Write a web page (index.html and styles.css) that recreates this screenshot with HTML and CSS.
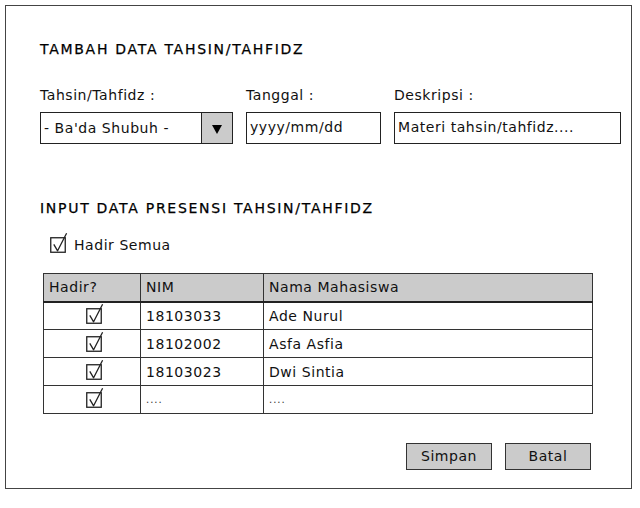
FILE: index.html
```html
<!DOCTYPE html>
<html>
<head>
<meta charset="utf-8">
<link rel="stylesheet" href="styles.css">
</head>
<body>
<div class="frame">
  <div class="h1">TAMBAH DATA TAHSIN/TAHFIDZ</div>
  <div class="form">
    <div class="label">Tahsin/Tahfidz :</div>
    <div class="label">Tanggal :</div>
    <div class="label">Deskripsi :</div>
    <div class="select">
      <span class="select-text">- Ba'da Shubuh -</span>
      <span class="select-btn"><span class="tri"></span></span>
    </div>
    <div class="input">yyyy/mm/dd</div>
    <div class="input">Materi tahsin/tahfidz....</div>
  </div>
  <div class="h2">INPUT DATA PRESENSI TAHSIN/TAHFIDZ</div>
  <div class="check-row">
    <svg class="cb" width="18" height="22" viewBox="0 0 18 22"><rect x="0.75" y="5.75" width="14.5" height="14.5" fill="#fff" stroke="#222" stroke-width="1.3"/><path d="M3.8 12.4 L7.6 18.8 L16.6 1.2" fill="none" stroke="#222" stroke-width="1.3" stroke-linejoin="round"/></svg>
    <span>Hadir Semua</span>
  </div>
  <table class="grid">
    <tr class="head"><td class="c1">Hadir?</td><td class="c2">NIM</td><td class="c3">Nama Mahasiswa</td></tr>
    <tr><td class="c1 ctr"><svg class="cb" width="18" height="22" viewBox="0 0 18 22"><rect x="0.75" y="5.75" width="14.5" height="14.5" fill="#fff" stroke="#222" stroke-width="1.3"/><path d="M3.8 12.4 L7.6 18.8 L16.6 1.2" fill="none" stroke="#222" stroke-width="1.3" stroke-linejoin="round"/></svg></td><td>18103033</td><td>Ade Nurul</td></tr>
    <tr><td class="c1 ctr"><svg class="cb" width="18" height="22" viewBox="0 0 18 22"><rect x="0.75" y="5.75" width="14.5" height="14.5" fill="#fff" stroke="#222" stroke-width="1.3"/><path d="M3.8 12.4 L7.6 18.8 L16.6 1.2" fill="none" stroke="#222" stroke-width="1.3" stroke-linejoin="round"/></svg></td><td>18102002</td><td>Asfa Asfia</td></tr>
    <tr><td class="c1 ctr"><svg class="cb" width="18" height="22" viewBox="0 0 18 22"><rect x="0.75" y="5.75" width="14.5" height="14.5" fill="#fff" stroke="#222" stroke-width="1.3"/><path d="M3.8 12.4 L7.6 18.8 L16.6 1.2" fill="none" stroke="#222" stroke-width="1.3" stroke-linejoin="round"/></svg></td><td>18103023</td><td>Dwi Sintia</td></tr>
    <tr><td class="c1 ctr"><svg class="cb" width="18" height="22" viewBox="0 0 18 22"><rect x="0.75" y="5.75" width="14.5" height="14.5" fill="#fff" stroke="#222" stroke-width="1.3"/><path d="M3.8 12.4 L7.6 18.8 L16.6 1.2" fill="none" stroke="#222" stroke-width="1.3" stroke-linejoin="round"/></svg></td><td class="dots">....</td><td class="dots">....</td></tr>
  </table>
  <div class="buttons">
    <div class="btn">Simpan</div>
    <div class="btn">Batal</div>
  </div>
</div>
</body>
</html>
```
FILE: styles.css
```css
* { box-sizing: border-box; }
html, body { margin: 0; padding: 0; background: #fff; }
body {
  font-family: "DejaVu Sans", sans-serif;
  font-size: 14px;
  letter-spacing: 0.55px;
  color: #111;
}
.frame {
  margin: 5px;
  width: 627px;
  height: 484px;
  border: 1.5px solid #444;
  padding: 34px 10px 0 34px;
  display: flex;
  flex-direction: column;
}
.h1, .h2 {
  height: 18px;
  line-height: 18px;
  letter-spacing: 1.72px;
  color: #000;
  -webkit-text-stroke: 0.25px #000;
}
.form {
  margin-top: 28px;
  display: grid;
  grid-template-columns: 193px 135px 227px;
  grid-template-rows: 18px 32px;
  column-gap: 13px;
  row-gap: 8px;
}
.label { line-height: 18px; }
.select {
  display: flex;
  border: 1px solid #222;
  background: #fff;
}
.select-text {
  flex: 1;
  padding-left: 3px;
  line-height: 30px;
}
.select-btn {
  width: 31px;
  background: #cbcbcb;
  border-left: 1px solid #222;
  display: flex;
  align-items: center;
  justify-content: center;
}
.tri {
  width: 0;
  height: 0;
  border-left: 5.5px solid transparent;
  border-right: 5.5px solid transparent;
  border-top: 9px solid #000;
  margin-top: 2px;
}
.input {
  border: 1px solid #222;
  padding-left: 3px;
  line-height: 28px;
}
.h2 { margin-top: 55px; }
.check-row {
  margin-top: 15px;
  height: 22px;
  display: flex;
  align-items: center;
  margin-left: 10px;
  gap: 6px;
}
.check-row span { line-height: 22px; padding-top: 4px; }
.cb { display: block; overflow: visible; }
.grid {
  margin-top: 19px;
  margin-left: 3px;
  width: 550px;
  border-collapse: collapse;
  border: 1.5px solid #333;
}
.grid tr { height: 28px; }
.grid td {
  border: 1px solid #333;
  padding: 0 0 0 5px;
  vertical-align: middle;
  line-height: 18px;
}
.grid .c1 { width: 97px; }
.grid .c2 { width: 123px; }
.grid .head td {
  background: #cbcbcb;
  border-bottom: 2px solid #222;
}
.grid td.ctr { padding: 0; }
.grid td.ctr .cb { margin: -4px auto 0 42px; }
.grid td.dots { font-size: 10px; color: #333; vertical-align: bottom; padding-bottom: 4px; letter-spacing: 1px; }
.buttons {
  margin-top: 29px;
  display: flex;
  justify-content: flex-end;
  gap: 13px;
  padding-right: 30px;
}
.btn {
  width: 86px;
  height: 27px;
  border: 1px solid #333;
  background: #cbcbcb;
  text-align: center;
  line-height: 25px;
}
```
